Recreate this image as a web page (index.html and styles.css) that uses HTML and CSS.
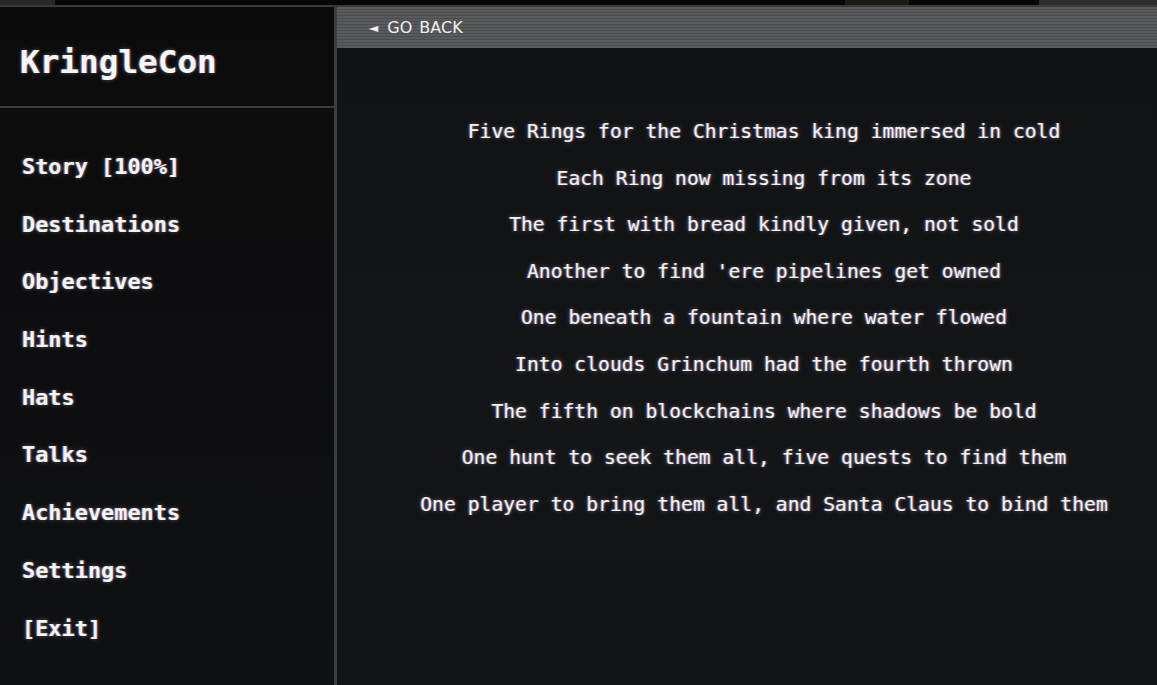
FILE: index.html
```html
<!DOCTYPE html>
<html>
<head>
<meta charset="utf-8">
<link rel="stylesheet" href="styles.css">
</head>
<body>
<div class="topstrip"><span class="blob b1"></span><span class="blob b2"></span><span class="blob b3"></span></div>
<div class="app">
  <aside class="sidebar">
    <div class="brand">KringleCon</div>
    <nav class="menu">
      <a class="item">Story [100%]</a>
      <a class="item">Destinations</a>
      <a class="item">Objectives</a>
      <a class="item">Hints</a>
      <a class="item">Hats</a>
      <a class="item">Talks</a>
      <a class="item">Achievements</a>
      <a class="item">Settings</a>
      <a class="item">[Exit]</a>
    </nav>
  </aside>
  <main class="main">
    <div class="backbar"><span class="arrow">◄</span><span class="back">GO BACK</span></div>
    <div class="poem">
      <p>Five Rings for the Christmas king immersed in cold</p>
      <p>Each Ring now missing from its zone</p>
      <p>The first with bread kindly given, not sold</p>
      <p>Another to find 'ere pipelines get owned</p>
      <p>One beneath a fountain where water flowed</p>
      <p>Into clouds Grinchum had the fourth thrown</p>
      <p>The fifth on blockchains where shadows be bold</p>
      <p>One hunt to seek them all, five quests to find them</p>
      <p>One player to bring them all, and Santa Claus to bind them</p>
    </div>
  </main>
</div>
</body>
</html>
```
FILE: styles.css
```css
html, body {
  margin: 0;
  padding: 0;
  width: 1157px;
  height: 685px;
  overflow: hidden;
  background: #0b0c0d;
  font-family: "DejaVu Sans Mono", "Liberation Mono", monospace;
  color: #f4f4f4;
}
.topstrip {
  height: 5px;
  background: #070707;
  border-bottom: 2px solid #3a3a3a;
  display: flex;
}
.blob { display: block; height: 5px; }
.b1 { width: 70px; background: #2a2622; }
.b2 { width: 80px; margin-left: 790px; background: #1c1a16; }
.b3 { width: 150px; margin-left: 130px; background: #2d2d2d; }
.app {
  display: flex;
  height: 678px;
}
.sidebar {
  width: 334px;
  flex: none;
  border-right: 3px solid #3b3c3e;
  background: linear-gradient(180deg, #0b0b0c 0%, #101113 100%);
  display: flex;
  flex-direction: column;
}
.brand {
  height: 101px;
  box-sizing: border-box;
  padding: 34px 0 0 20px;
  font-size: 32.7px;
  font-weight: bold;
  line-height: 42px;
  color: #f6f6f6;
  border-bottom: 2px solid #3b3c3e;
  text-shadow: -1px 0 rgba(120,160,255,0.5), 1px 0 rgba(255,120,120,0.4), 0 0 4px rgba(255,255,255,0.3);
}
.menu {
  display: flex;
  flex-direction: column;
  padding: 46px 0 0 22px;
  gap: 31.7px;
}
.item {
  font-size: 21.9px;
  font-weight: bold;
  line-height: 26px;
  color: #f4f4f4;
  text-shadow: -1px 0 rgba(120,160,255,0.5), 1px 0 rgba(255,120,120,0.4), 0 0 4px rgba(255,255,255,0.3);
}
.main {
  flex: 1;
  display: flex;
  flex-direction: column;
  background: linear-gradient(180deg, #111214 0%, #141517 60%, #121315 100%);
}
.backbar {
  height: 41px;
  flex: none;
  background: repeating-linear-gradient(180deg, #595a5b 0px, #595a5b 2px, #4b4c4d 2px, #4b4c4d 3px);
  display: flex;
  align-items: center;
  padding-left: 32px;
  color: #f0f0f0;
  font-family: "DejaVu Sans", "Liberation Sans", sans-serif;
  font-size: 16px;
}
.arrow {
  font-size: 12px;
  margin-right: 9px;
}
.back { word-spacing: 2px; }
.poem {
  padding: 71px 0 0 34px;
  display: flex;
  flex-direction: column;
  align-items: center;
}
.poem p {
  margin: 0;
  height: 46.6px;
  line-height: 26px;
  font-size: 19.7px;
  white-space: nowrap;
  color: #f4f4f4;
  text-shadow: -1px 0 rgba(120,160,255,0.5), 1px 0 rgba(255,120,120,0.4), 0 0 4px rgba(255,255,255,0.35);
}
```
